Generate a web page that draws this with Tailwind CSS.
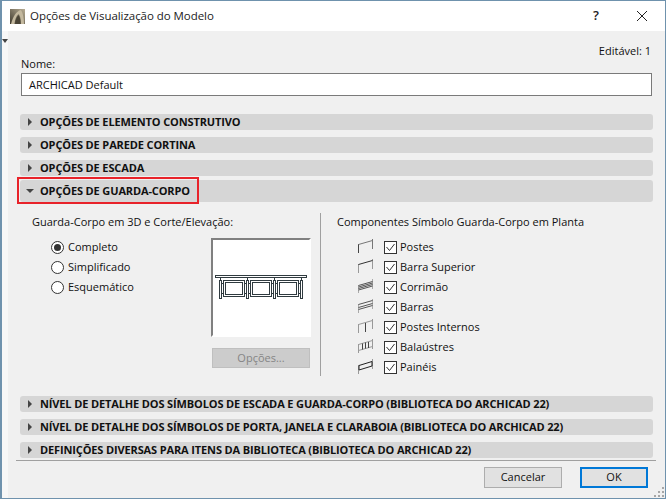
<!DOCTYPE html>
<html lang="pt">
<head>
    <meta charset="UTF-8">
    <title>Opções de Visualização do Modelo</title>
    <script src="https://cdn.jsdelivr.net/npm/@tailwindcss/browser@4"></script>
</head>
<body class="bg-white font-['Open_Sans',sans-serif] text-[11px] text-[#111]">
<div class="relative w-[666px] h-[499px] overflow-hidden border border-l-2 border-[#6f92ad] flex flex-col bg-[#f0f0f0]">
    <!-- Title bar -->
    <div class="h-[30px] shrink-0 bg-white flex items-center">
        <svg class="ml-[8px] w-[15px] h-[15px]" viewBox="0 0 15 15">
            <defs><linearGradient id="logo" x1="0" y1="1" x2="1" y2="0"><stop offset="0" stop-color="#3f3a2e"/><stop offset="1" stop-color="#b8ad94"/></linearGradient></defs>
            <rect width="15" height="15" fill="url(#logo)"/>
            <path d="M1 15C3 8 6 2 11 1C13 4 14 9 14 15H11C11 10 10 6 8.500 5C6 7 5 11 4.500 15Z" fill="#c4b99f"/>
            <path d="M5 15C5.500 11 6.500 8 8.500 6C10 8 10.500 11 10.500 15Z" fill="#4a4436"/>
        </svg>
        <span class="ml-[5px] text-[11.500px] tracking-[-0.05px] text-[#222]">Opções de Visualização do Modelo</span>
        <span class="ml-auto mr-[38px] text-[13px] font-semibold text-[#222]">?</span>
        <svg class="mr-[18px] w-[10px] h-[10px]" viewBox="0 0 10 10"><path d="M0 0L10 10M10 0L0 10" stroke="#222" stroke-width="1" fill="none"/></svg>
    </div>

    <div class="flex flex-1">
        <!-- Left strip with the small arrow -->
        <div class="w-[6px] shrink-0 bg-[#f7f7f7] pt-[8px]">
            <div class="w-0 h-0 border-x-[3px] border-x-transparent border-t-[4px] border-t-[#444]"></div>
        </div>

        <div class="flex-1 pl-[12px] pr-[12px] flex flex-col">
            <div class="h-[14px] mt-[13px] leading-[14px] text-right pr-[2px]">Editável: 1</div>
            <div class="h-[14px] -mt-[1px] leading-[14px] pl-[1px]">Nome:</div>
            <div class="h-[23px] mt-[2px] mx-[1px] border border-[#7a7a7a] bg-white pl-[7px] leading-[21px]">ARCHICAD Default</div>

            <div class="mt-[18px] h-[16px] rounded-[3px] bg-[#d6d6d6] flex items-center font-bold leading-none">
                <div class="ml-[8px] w-[12px]"><div class="w-0 h-0 border-y-[4px] border-y-transparent border-l-[4px] border-l-[#444]"></div></div>
                <span class="mb-[2px] tracking-[-0.13px]">OPÇÕES DE ELEMENTO CONSTRUTIVO</span>
            </div>
            <div class="mt-[7px] h-[16px] rounded-[3px] bg-[#d6d6d6] flex items-center font-bold leading-none">
                <div class="ml-[8px] w-[12px]"><div class="w-0 h-0 border-y-[4px] border-y-transparent border-l-[4px] border-l-[#444]"></div></div>
                <span class="mb-[2px] tracking-[-0.13px]">OPÇÕES DE PAREDE CORTINA</span>
            </div>
            <div class="mt-[7px] h-[16px] rounded-[3px] bg-[#d6d6d6] flex items-center font-bold leading-none">
                <div class="ml-[8px] w-[12px]"><div class="w-0 h-0 border-y-[4px] border-y-transparent border-l-[4px] border-l-[#444]"></div></div>
                <span class="mb-[2px] tracking-[-0.13px]">OPÇÕES DE ESCADA</span>
            </div>
            <div class="relative mt-[4px] h-[22px] rounded-[3px] bg-[#d6d6d6] flex items-center font-bold leading-none">
                <div class="ml-[6px] w-[14px]"><div class="w-0 h-0 border-x-[4px] border-x-transparent border-t-[4px] border-t-[#444]"></div></div>
                <span class="mb-[2px] tracking-[-0.13px]">OPÇÕES DE GUARDA-CORPO</span>
                <div class="absolute -left-[3px] -top-[3px] w-[182px] h-[27px] border-2 border-[#e8232a]"></div>
            </div>

            <!-- Guard rail panel -->
            <div class="h-[194px] flex">
                <div class="w-[301px] mt-[11px] h-[163px] pl-[12px] border-r border-[#a0a0a0]">
                    <div class="h-[18px] leading-[18px]">Guarda-Corpo em 3D e Corte/Elevação:</div>
                    <div class="flex mt-[6px]">
                        <div class="w-[179px] pl-[19px]">
                            <div class="h-5 flex items-center gap-[4px]">
                                <span class="w-[13px] h-[13px] rounded-full border border-[#333] bg-white flex items-center justify-center"><span class="w-[7px] h-[7px] rounded-full bg-[#333]"></span></span>Completo
                            </div>
                            <div class="h-5 flex items-center gap-[4px]">
                                <span class="w-[13px] h-[13px] rounded-full border border-[#333] bg-white"></span>Simplificado
                            </div>
                            <div class="h-5 flex items-center gap-[4px]">
                                <span class="w-[13px] h-[13px] rounded-full border border-[#333] bg-white"></span>Esquemático
                            </div>
                        </div>
                        <div class="w-[100px] mt-[1px]">
                            <div class="h-[99px] border-2 border-t-[#808080] border-l-[#808080] border-r-white border-b-white bg-white">
                                <svg class="w-[96px] h-[95px]" viewBox="213 240 96 95" fill="none" stroke="#2f3a3f" stroke-width="1" shape-rendering="crispEdges">
                                    <rect x="215.500" y="275.500" width="91" height="2"/>
                                    <path d="M220.500 278V280M247.500 278V280M274.500 278V280M301.500 278V280"/>
                                    <rect x="219.500" y="280.500" width="2" height="18"/>
                                    <rect x="246.500" y="280.500" width="2" height="18"/>
                                    <rect x="273.500" y="280.500" width="2" height="18"/>
                                    <rect x="300.500" y="280.500" width="2" height="18"/>
                                    <rect x="223.500" y="280.500" width="21" height="16"/>
                                    <rect x="225.500" y="282.500" width="17" height="12"/>
                                    <rect x="250.500" y="280.500" width="21" height="16"/>
                                    <rect x="252.500" y="282.500" width="17" height="12"/>
                                    <rect x="277.500" y="280.500" width="21" height="16"/>
                                    <rect x="279.500" y="282.500" width="17" height="12"/>
                                    <path d="M222 283.500H223M222 293.500H223M245 283.500H246M245 293.500H246M249 283.500H250M249 293.500H250M272 283.500H273M272 293.500H273M276 283.500H277M276 293.500H277M299 283.500H300M299 293.500H300"/>
                                </svg>
                            </div>
                            <div class="mt-[11px] mx-[1px] h-[20px] bg-[#cccccc] border border-[#bfbfbf] text-[#858585] flex items-center justify-center">Opções...</div>
                        </div>
                    </div>
                </div>
                <div class="flex-1 mt-[11px] pl-[16px]">
                    <div class="h-[18px] leading-[18px]">Componentes Símbolo Guarda-Corpo em Planta</div>
                    <div class="mt-[6px] pl-[20px]">
                        <div class="h-5 flex items-center">
                            <svg class="w-[16px] h-[16px] mr-[11px]" viewBox="0 0 16 16" fill="none" stroke="#777"><path d="M1.500 5V14" stroke="#444"/><path d="M1.500 5.500L15.500 1.500M15.500 0V10"/></svg>
                            <span class="w-[13px] h-[13px] border border-[#333] bg-white mr-[3px]"><svg viewBox="0 0 11 11" fill="none" stroke="#333"><path d="M1.500 5L4.500 8.500L9.500 2"/></svg></span>Postes
                        </div>
                        <div class="h-5 flex items-center">
                            <svg class="w-[16px] h-[16px] mr-[11px]" viewBox="0 0 16 16" fill="none" stroke="#999"><path d="M1.500 5V14M15.500 0V10"/><path d="M1.500 5.500L15.500 1.500" stroke="#333"/></svg>
                            <span class="w-[13px] h-[13px] border border-[#333] bg-white mr-[3px]"><svg viewBox="0 0 11 11" fill="none" stroke="#333"><path d="M1.500 5L4.500 8.500L9.500 2"/></svg></span>Barra Superior
                        </div>
                        <div class="h-5 flex items-center">
                            <svg class="w-[16px] h-[16px] mr-[11px]" viewBox="0 0 16 16" fill="none" stroke="#555"><path d="M1.500 6V14M15.500 0V10" stroke="#aaa"/><path d="M1.500 6.500L15.500 2.500M1.500 8L15.500 4M1.500 9.500L15.500 5.500M1.500 11L15.500 7"/></svg>
                            <span class="w-[13px] h-[13px] border border-[#333] bg-white mr-[3px]"><svg viewBox="0 0 11 11" fill="none" stroke="#333"><path d="M1.500 5L4.500 8.500L9.500 2"/></svg></span>Corrimão
                        </div>
                        <div class="h-5 flex items-center">
                            <svg class="w-[16px] h-[16px] mr-[11px]" viewBox="0 0 16 16" fill="none" stroke="#555"><path d="M1.500 5V14M15.500 0V10" stroke="#aaa"/><path d="M1.500 5.500L15.500 1.500M1.500 8.500L15.500 4.500M1.500 10.500L15.500 6.500"/></svg>
                            <span class="w-[13px] h-[13px] border border-[#333] bg-white mr-[3px]"><svg viewBox="0 0 11 11" fill="none" stroke="#333"><path d="M1.500 5L4.500 8.500L9.500 2"/></svg></span>Barras
                        </div>
                        <div class="h-5 flex items-center">
                            <svg class="w-[16px] h-[16px] mr-[11px]" viewBox="0 0 16 16" fill="none" stroke="#999"><path d="M1.500 5V14M15.500 0V10M1.500 5.500L15.500 1.500"/><path d="M8.500 4V13" stroke="#444"/></svg>
                            <span class="w-[13px] h-[13px] border border-[#333] bg-white mr-[3px]"><svg viewBox="0 0 11 11" fill="none" stroke="#333"><path d="M1.500 5L4.500 8.500L9.500 2"/></svg></span>Postes Internos
                        </div>
                        <div class="h-5 flex items-center">
                            <svg class="w-[16px] h-[16px] mr-[11px]" viewBox="0 0 16 16" fill="none" stroke="#999"><path d="M1.500 5V14M15.500 0V10M1.500 5.500L15.500 1.500M1.500 11.500L15.500 7.500"/><path d="M5.500 4.500V10.500M8.500 3.500V9.500M11.500 3V9" stroke="#444"/></svg>
                            <span class="w-[13px] h-[13px] border border-[#333] bg-white mr-[3px]"><svg viewBox="0 0 11 11" fill="none" stroke="#333"><path d="M1.500 5L4.500 8.500L9.500 2"/></svg></span>Balaústres
                        </div>
                        <div class="h-5 flex items-center">
                            <svg class="w-[16px] h-[16px] mr-[11px]" viewBox="0 0 16 16" fill="none" stroke="#999"><path d="M1.500 6V15M15.500 0V10"/><path d="M2 6.500L15 2.500V7L2 11Z" stroke="#222"/></svg>
                            <span class="w-[13px] h-[13px] border border-[#333] bg-white mr-[3px]"><svg viewBox="0 0 11 11" fill="none" stroke="#333"><path d="M1.500 5L4.500 8.500L9.500 2"/></svg></span>Painéis
                        </div>
                    </div>
                </div>
            </div>

            <div class="h-[16px] rounded-[3px] bg-[#d6d6d6] flex items-center font-bold leading-none">
                <div class="ml-[8px] w-[12px]"><div class="w-0 h-0 border-y-[4px] border-y-transparent border-l-[4px] border-l-[#444]"></div></div>
                <span class="mb-[2px] tracking-[-0.13px]">NÍVEL DE DETALHE DOS SÍMBOLOS DE ESCADA E GUARDA-CORPO (BIBLIOTECA DO ARCHICAD 22)</span>
            </div>
            <div class="mt-[7px] h-[16px] rounded-[3px] bg-[#d6d6d6] flex items-center font-bold leading-none">
                <div class="ml-[8px] w-[12px]"><div class="w-0 h-0 border-y-[4px] border-y-transparent border-l-[4px] border-l-[#444]"></div></div>
                <span class="mb-[2px] tracking-[-0.13px]">NÍVEL DE DETALHE DOS SÍMBOLOS DE PORTA, JANELA E CLARABOIA (BIBLIOTECA DO ARCHICAD 22)</span>
            </div>
            <div class="mt-[7px] h-[16px] rounded-[3px] bg-[#d6d6d6] flex items-center font-bold leading-none">
                <div class="ml-[8px] w-[12px]"><div class="w-0 h-0 border-y-[4px] border-y-transparent border-l-[4px] border-l-[#444]"></div></div>
                <span class="mb-[2px] tracking-[-0.13px]">DEFINIÇÕES DIVERSAS PARA ITENS DA BIBLIOTECA (BIBLIOTECA DO ARCHICAD 22)</span>
            </div>

            <div class="mt-[2px] -ml-[4px] -mr-[3px] h-[1px] bg-[#a0a0a0]"></div>

            <div class="mt-[6px] flex justify-end pr-[5px]">
                <div class="w-[78px] h-[21px] bg-[#e1e1e1] border border-[#adadad] flex items-center justify-center">Cancelar</div>
                <div class="ml-[18px] w-[68px] h-[21px] bg-[#e1e1e1] border-2 border-[#0078d7] flex items-center justify-center">OK</div>
            </div>
        </div>
    </div>

    <!-- Resize grip -->
    <svg class="absolute right-0 bottom-0 w-[12px] h-[12px]" viewBox="0 0 12 12" fill="#a6a6a6">
        <rect x="9" y="1" width="2" height="2"/><rect x="5" y="5" width="2" height="2"/><rect x="9" y="5" width="2" height="2"/><rect x="1" y="9" width="2" height="2"/><rect x="5" y="9" width="2" height="2"/><rect x="9" y="9" width="2" height="2"/>
    </svg>
</div>
</body>
</html>
